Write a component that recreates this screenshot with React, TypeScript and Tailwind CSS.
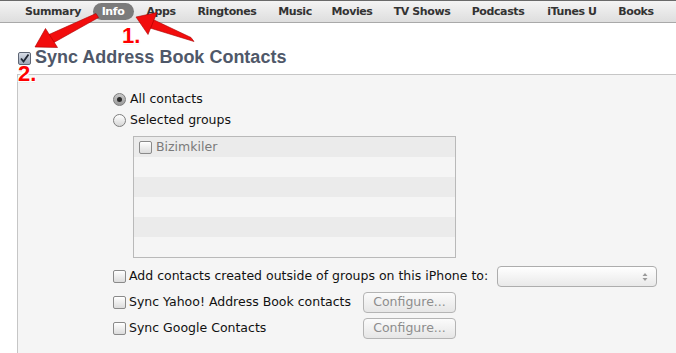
import { ReactNode } from 'react';

const tabs: [string, number][] = [
  ['Summary', 60],
  ['Info', 60],
  ['Apps', 36],
  ['Ringtones', 96],
  ['Music', 40],
  ['Movies', 74],
  ['TV Shows', 66],
  ['Podcasts', 86],
  ['iTunes U', 62],
  ['Books', 66],
];

const ui = { fontFamily: '"DejaVu Sans", "Liberation Sans", sans-serif' };
const arial = { fontFamily: '"Liberation Sans", Arial, sans-serif' };

function Checkbox() {
  return (
    <span className="inline-block w-[13px] h-[13px] shrink-0 rounded-[2px] border border-[#8a8a8a] bg-gradient-to-b from-[#ffffff] to-[#dcdcdc] shadow-[inset_0_1px_0_#fff]" />
  );
}

function Radio({ on }: { on?: boolean }) {
  return (
    <span
      className={
        'flex items-center justify-center w-[13px] h-[13px] shrink-0 rounded-full border border-[#7d7d7d] ' +
        (on ? 'bg-gradient-to-b from-[#c9c9c9] to-[#9a9a9a]' : 'bg-gradient-to-b from-[#ffffff] to-[#d6d6d6]')
      }
    >
      {on && <span className="w-[5px] h-[5px] rounded-full bg-[#2b2b2b]" />}
    </span>
  );
}

function Button({ children }: { children: ReactNode }) {
  return (
    <div className="w-[93px] h-[21px] rounded-[4px] border border-[#b4b4b4] bg-gradient-to-b from-[#fbfbfb] to-[#e6e6e6] flex items-center justify-center text-[12.5px] text-[#8d8d8d]">
      {children}
    </div>
  );
}

export default function App() {
  return (
    <div className="relative w-[676px] h-[353px] overflow-hidden bg-white" style={ui}>
      {/* tab strip */}
      <div className="h-[23px] border-t border-[#6a6a6a] border-b border-b-[#a9a9a9] bg-gradient-to-b from-[#f4f4f4] to-[#dedede] flex items-center pl-[23px]">
        {tabs.map(([t, w]) => (
          <div key={t} className="flex justify-center shrink-0" style={{ width: w }}>
            <div
              className={
                'h-[17px] flex items-center justify-center whitespace-nowrap rounded-full text-[11px] font-bold tracking-[-0.4px] leading-none ' +
                (t === 'Info' ? 'w-[41px] bg-[#7b7b7b] text-white' : 'text-[#333333]')
              }
            >
              {t}
            </div>
          </div>
        ))}
      </div>

      {/* heading */}
      <div className="h-[51px] flex items-end pb-[8px] pl-[18px] gap-[4px]">
        <span className="w-[13px] h-[13px] mb-[1px] rounded-[2px] border border-[#5e6675] bg-gradient-to-b from-[#d7dde7] to-[#9ea8b8] flex items-center justify-center">
          <svg width="11" height="11" viewBox="0 0 11 11">
            <path d="M2 5.5 L4.5 8.5 L9.5 1.5" fill="none" stroke="#1f2633" strokeWidth="1.8" />
          </svg>
        </span>
        <span className="text-[18px] font-bold text-[#4f5869] leading-none" style={arial}>
          Sync Address Book Contacts
        </span>
      </div>

      {/* panel */}
      <div className="ml-[17px] h-[280px] border-t border-l border-[#c6c6c6] bg-[#f5f5f5] pl-[95px] pt-[17px] text-[12.5px] text-[#111]">
        <div className="flex items-center gap-[4px] h-[14px]">
          <Radio on />
          <span>All contacts</span>
        </div>
        <div className="flex items-center gap-[4px] h-[14px] mt-[7px]">
          <Radio />
          <span>Selected groups</span>
        </div>

        <div className="ml-[20px] mt-[9px] w-[323px] h-[122px] border border-[#b9b9b9] bg-[#f5f5f5]">
          {[0, 1, 2, 3, 4, 5].map((i) => (
            <div key={i} className={'h-[20px] flex items-center gap-[4px] pl-[5px] ' + (i % 2 === 0 ? 'bg-[#ebebeb]' : '')}>
              {i === 0 && (
                <>
                  <Checkbox />
                  <span className="text-[#7a7a7a]">Bizimkiler</span>
                </>
              )}
            </div>
          ))}
        </div>

        <div className="flex items-center mt-[8px] h-[21px]">
          <Checkbox />
          <span className="ml-[3px] w-[368px] whitespace-nowrap">Add contacts created outside of groups on this iPhone to:</span>
          <div className="w-[160px] h-[21px] rounded-[4px] border border-[#adadad] bg-gradient-to-b from-[#ffffff] to-[#e9e9e9] flex items-center justify-end pr-[8px]">
            <svg width="6" height="10" viewBox="0 0 6 10">
              <path d="M3 1 L5.5 4 H0.5 Z M3 9 L5.5 6 H0.5 Z" fill="#9a9a9a" />
            </svg>
          </div>
        </div>

        <div className="flex items-center mt-[5px] h-[21px]">
          <Checkbox />
          <span className="ml-[3px] w-[234px] whitespace-nowrap">Sync Yahoo! Address Book contacts</span>
          <Button>Configure...</Button>
        </div>

        <div className="flex items-center mt-[5px] h-[21px]">
          <Checkbox />
          <span className="ml-[3px] w-[234px] whitespace-nowrap">Sync Google Contacts</span>
          <Button>Configure...</Button>
        </div>
      </div>

      {/* annotation arrows */}
      <svg className="absolute left-0 top-0 pointer-events-none" width="676" height="353">
        <g fill="#f20d0d" stroke="#a80000" strokeWidth="0.6" strokeLinejoin="round">
          <polygon points="194,41.5 191,37.5 153,19.5 150,28" />
          <polygon points="136,17 157,12.5 148,34.5" />
          <polygon points="96,13.5 98.5,17.5 53,43 49,34.5" />
          <polygon points="35,47 45.5,28.5 57.5,47.5" />
        </g>
      </svg>
      <span
        className="absolute left-[122px] top-[25px] text-[22px] font-bold text-[#ff0000] leading-none [text-shadow:1px_1px_0_#fff,-1px_-1px_0_#fff,1px_-1px_0_#fff,-1px_1px_0_#fff,0_1px_1px_#999]"
        style={arial}
      >
        1.
      </span>
      <span
        className="absolute left-[18px] top-[63px] text-[22px] font-bold text-[#ff0000] leading-none [text-shadow:1px_1px_0_#fff,-1px_-1px_0_#fff,1px_-1px_0_#fff,-1px_1px_0_#fff,0_1px_1px_#999]"
        style={arial}
      >
        2.
      </span>
    </div>
  );
}
